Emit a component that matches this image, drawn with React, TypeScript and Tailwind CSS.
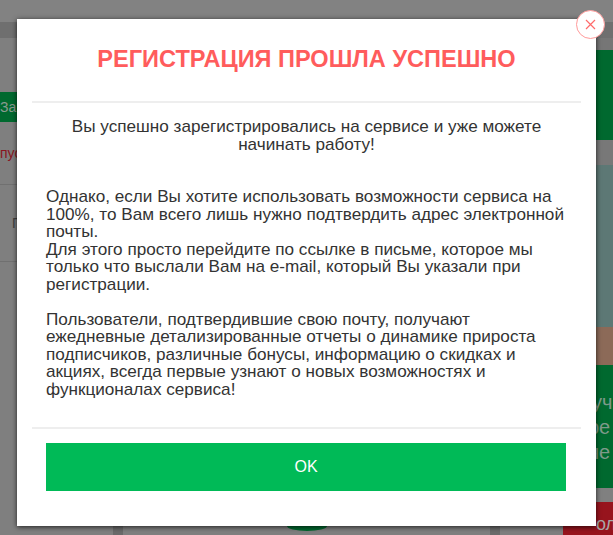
const FONT = "font-['Liberation_Sans',Arial,sans-serif]";

export default function App() {
  return (
    <div className={`relative h-[535px] w-[613px] overflow-hidden bg-[#7f7f7f] ${FONT}`}>
      <div className="flex h-full flex-col">
        <div className="h-[22px] bg-[#828282]" />
        <div className="h-[16px] bg-[#6f6f6f]" />
        <div className="flex flex-1">
          <div className="flex w-[17px] flex-col overflow-hidden">
            <div className="h-[54px]" />
            <div className="flex h-[30px] items-center overflow-hidden whitespace-nowrap bg-[#00692f] text-[14px] text-[#8a9a90]">За</div>
            <div className="flex h-[63px] items-center overflow-hidden whitespace-nowrap border-b border-[#707070] text-[14px] text-[#8a1620]">пус</div>
            <div className="flex h-[76px] items-center overflow-hidden pl-[12px] whitespace-nowrap text-[14px] text-[#404040]">П</div>
            <div className="h-px bg-[#707070]" />
          </div>
          <div className="flex flex-1 flex-col justify-end">
            <div className="flex h-[9px] items-start">
              <div className="ml-[96px] h-[9px] w-[10px] bg-[#6a6a6a]" />
              <div className="ml-[164px] h-[5px] w-[40px] rounded-br-[20px_5px] rounded-bl-[20px_5px] bg-[#00692f]" />
              <div className="ml-[163px] h-[9px] w-[10px] bg-[#6a6a6a]" />
              <div className="ml-[63px] h-[9px] w-[33px] bg-[#97141d]" />
            </div>
          </div>
          <div className="flex w-[17px] flex-col">
            <div className="h-[12px] bg-[#767676]" />
            <div className="h-[90px] bg-[#00692f]" />
            <div className="h-[25px] bg-[#787878]" />
            <div className="h-[162px] bg-[#5d7875]" />
            <div className="h-[38px] bg-[#8c6a58]" />
            <div className="flex h-[123px] flex-col justify-center overflow-hidden whitespace-nowrap bg-[#00692f] pt-[2px] text-[20px] leading-[25px] text-[#7f9a8a]">
              <span className="-ml-[4px]">уч</span>
              <span className="-ml-[8px]">ре</span>
              <span className="-ml-[8px]">не</span>
            </div>
            <div className="h-[14px] bg-[#808080]" />
            <div className="flex flex-1 items-end overflow-hidden whitespace-nowrap bg-[#97141d] pb-[1px] text-[18px] leading-[20px] text-[#a8a8a8]">ол</div>
          </div>
        </div>
      </div>

      <div className="absolute left-[17px] top-[19px] flex h-[507px] w-[579px] flex-col bg-white px-[15px] shadow-[0_1px_5px_rgba(0,0,0,0.75)]">
        <h1 className="mt-[24px] text-center text-[23.55px] leading-[32px] font-bold text-[#ff5c5c]">РЕГИСТРАЦИЯ ПРОШЛА УСПЕШНО</h1>
        <div className="mt-[26px] h-[2px] bg-[#eeeeee]" />
        <div className="flex flex-col px-[14px] text-[17.15px] leading-[17.5px] text-[#333333]">
          <p className="mt-[15px] text-center">Вы успешно зарегистрировались на сервисе и уже можете начинать работу!</p>
          <p className="mt-[35px]">
            Однако, если Вы хотите использовать возможности сервиса на 100%, то Вам всего лишь нужно подтвердить адрес электронной почты.
            <br />
            Для этого просто перейдите по ссылке в письме, которое мы только что выслали Вам на e-mail, который Вы указали при регистрации.
          </p>
          <p className="mt-[17.5px]">
            Пользователи, подтвердившие свою почту, получают ежедневные детализированные отчеты о динамике прироста подписчиков, различные бонусы, информацию о скидках и акциях, всегда первые узнают о новых возможностях и функционалах сервиса!
          </p>
        </div>
        <div className="mt-[29px] h-[2px] bg-[#eeeeee]" />
        <div className="mb-[35px] ml-[14px] mr-[15px] mt-[14px] flex h-[48px] items-center justify-center bg-[#00ba57] text-[16px] text-white">OK</div>
      </div>

      <div className="absolute left-[576px] top-[10px] flex h-[29px] w-[29px] items-center justify-center rounded-full border-[1.5px] border-[#ff9a9a] bg-white">
        <svg width="11" height="11" viewBox="0 0 11 11" fill="none" stroke="#ff6b6b" strokeWidth="1.2">
          <path d="M1 1 10 10M10 1 1 10" />
        </svg>
      </div>
    </div>
  );
}
